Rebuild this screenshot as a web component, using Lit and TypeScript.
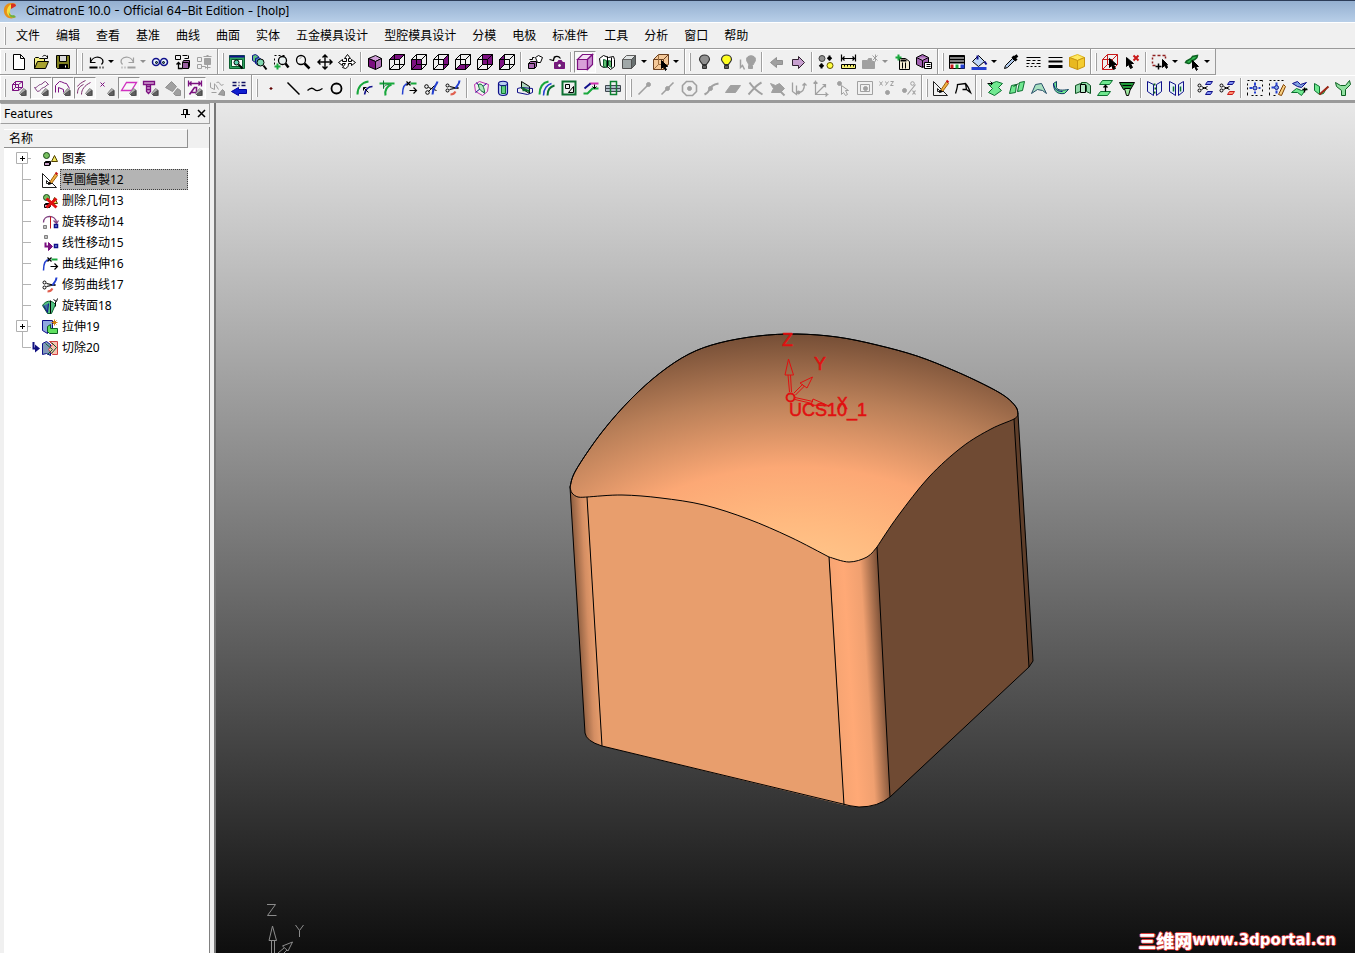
import { LitElement, html, svg, css, nothing } from "lit";
import { customElement, property, state } from "lit/decorators.js";
import { classMap } from "lit/directives/class-map.js";

type Stroke = [d: string, stroke?: string, fill?: string, width?: number];
type Point = [number, number];

const K = "#000";
const P = "#7b1080";
const G = "#a0a0a0";
const N = "#10108a";
const B = "#2440d0";
const E = "#18a83c";
const L = "#70e890";
const R = "#c81818";

const c = (x: number, y: number, r: number) =>
  `M${x - r} ${y}a${r} ${r} 0 1 0 ${2 * r} 0a${r} ${r} 0 1 0 ${-2 * r} 0`;

const WIRE = "M0 5h10v10h-10zM0 5l5-5h10v10l-5 5M10 5l5-5M5 0v10h10M5 10l-5 5";
const cube = (face: string, tint = P): Stroke[] => [[face, K, tint], [WIRE, K]];
const eraser: Stroke[] = [
  ["M8 13l4-5 3 2v5h-5z", "#8a8a8a", "#b4b4b4"],
  ["M9 14l5-4v5h-4z", "#505050", "#606060"],
];
const sheet = (d: string): Stroke => [d, "#0c7030", L];
const bulb = (tint: string): Stroke[] => [
  ["M6 10c0-1-3-3-3-5c0-6 10-6 10 0c0 2-3 4-3 5z", "#303030", tint, 1.2],
  ["M6 11h4v3h-4z", "#303030", "#606060"],
];
const scissors = (tint: string): Stroke[] => [
  [c(2, 5, 1.5), K],
  [c(2, 10, 1.5), K],
  ["M4 6l6 3M4 9l6-3", K],
  ["M8 4l2-3h5l-2 3z", N, "#8090f0"],
  ["M8 14l2-3h5l-2 3z", tint, tint === N ? "#8090f0" : "#ff9070"],
];
const entity: Stroke[] = [
  [c(4, 4, 3), "#184818", "#78c060"],
  ["M12 4l-3 6h6z", "#504000", "#f0e860"],
  ["M2 11h5v3h-5zM2 11l1-1h5v3l-1 1", K, "#c8a0c8"],
];
const sketch: Stroke[] = [
  ["M0 1v14h14zM4 8v3h3z", "#202020"],
  ["M7 10l6-9 2 2-6 8z", "#a06010", "#f0b040"],
  ["M13 0l2 2", R, "none", 2],
  ["M6 12l1-2 2 1z", K, K],
];
const pointer: Stroke = ["M8 6v8l2-2 2 4 1-1-2-3h3z", K, K];

const ICONS: Record<string, Stroke[]> = {
  new: [["M2 0h7l4 4v11h-11zM9 0v4h4", K, "#fff"]],
  open: [["M1 14v-10l1-1h3l1 1h5v3", K, "#f4f080"], ["M1 14l3-7h11l-3 7z", K, "#a8a230"], ["M9 2c2-2 4-1 5 1M14 1v3h-3", K]],
  save: [["M1 1h13v13h-12l-1-1z", K, "#808020"], ["M4 1h7v6h-7z", K, "#d8d8d8"], ["M4 10h8v4h-8z", K, K], ["M10 11v2", "#fff", "#fff"]],
  undo: [["M2 3v5h5M2 8c2-6 9-7 12-3c1 2 0 4-1 5", K, "none", 1.2], ["M1 13h8", K, "none", 2], ["M11 13h1M14 13h1", K, "none", 2]],
  redo: [["M13 3v5h-5M13 8c-2-6-9-7-12-3c-1 2 0 4 1 5", G, "none", 1.2], ["M7 13h8", G, "none", 2], ["M1 13h1M4 13h1", G, "none", 2]],
  glasses: [[c(3.5, 7.5, 3.5), N, "#e8f4ff", 1.5], [c(11.5, 7.5, 3.5), N, "#e8f4ff", 1.5], [c(4, 8, 1), K, "#4080b0"], [c(11, 8, 1), K, "#4080b0"]],
  swap: [["M1 1h5v4h-5zM8 1h5M10 4h4v-3", K], ["M4 8v6h4M2 10l2-2 2 2", K, "none", 1.3], ["M8 8h6v6h-6zM8 8l1-2h6v6l-1 2", K, "#9860a0"]],
  trash: [["M1 3h4v4h-4zM1 10h4v4h-4zM5 12h4v2", G], ["M7 2h8M8 4h6v6h-6zM10 1h2", G, G], ["M11 10v5M9 13h5", G]],
  fit: [["M0 1h15v13h-15z", "#0c6030", "#30a060"], ["M0 2h15", N, "none", 2], ["M2 5h11v7h-11z", "#0c6030", "#fff"], [c(7, 8, 2.5), K, "#60d0b0"], ["M9 10l4 4", K, "none", 2]],
  zoomSel: [["M1 1l3-1 3 2v5l-3 1-3-2z", N, "#60c080"], ["M4 4l3-1 3 2v5l-3 1-3-2z", N, "#4080c0"], [c(9, 8, 3.5), K, "#80d8b0"], ["M12 11l3 4", K, "none", 2]],
  zoomWin: [["M1 1h2M5 1h2M9 1h2M1 4v2M1 8v2", K], [c(9, 6, 4), K, "#e8f0f0", 1.3], ["M12 9l3 4", K, "none", 2.5], ["M4 9v6M1 12h6", E, "none", 2]],
  zoom: [[c(5.5, 5.5, 4.5), K, "#f4f4f4", 1.3], ["M9 9l5 5", K, "none", 2.5], ["M4 4l2-1", G]],
  pan: [["M7.500 0v15M0 7.500h15M5 3l2.500-2.500 2.500 2.500M5 12l2.500 2.500 2.500-2.500M3 5l-2.500 2.500 2.500 2.500M12 5l2.500 2.500-2.500 2.500", K, "none", 1.4]],
  orbit: [["M5 4l3-4 3 4h-2v3h3v-2l4 3-4 3v-2h-3c0 3-1 4-3 5l-3-1 3-4h-3v2l-4-3 4-3v2h4v-3z", K, "#fff"]],
  iso: [["M1 4l7-3 6 3-6 3z", K, "#d0a0d8"], ["M1 4l7 3v8l-7-3z", K, P], ["M14 4l-6 3v8l6-3z", K, "#b070b8"]],
  top: cube("M0 5l5-5h10l-5 5z"),
  front: cube("M0 5h10v10h-10z"),
  right: cube("M10 5l5-5v10l-5 5z"),
  bottom: cube("M0 15l5-5h10l-5 5z"),
  back: cube("M5 0h10v10h-10z"),
  left: cube("M0 5l5-5v10l-5 5z"),
  light: [["M1 9h6v5h-6zM1 9l2-2h6v5l-2 2", K, "#a868b0"], ["M8 3l3-2 4 2-2 5h-3zM7 3h-2v2h-3", K, "#fff"]],
  camera: [["M5 8h10v6h-10zM8 8l1-2h3l1 2", P, "#702078"], [c(10, 11, 1), "#fff", "#fff"], ["M0 5l4 1 1-4M4 5c1-4 5-4 7-1", K, "none", 1.2]],
  shaded: [["M0 5h10v10h-10z", P, "#d8a0d8", 1.2], ["M0 5l5-5h10l-5 5z", P, "#f4e0f4", 1.2], ["M10 5l5-5v10l-5 5z", P, "#c890d0", 1.2]],
  section: [["M0 4l4-3 5 2 5-1 1 3v7l-4 3-3-3-4 1-3-2z", K, "#fff"], ["M4 5l3 1v7l-3-1zM9 6l3 1v6l-3-2z", "#0c6030", "#60c070"], ["M8 2v11M12 3v9", K]],
  solid: [["M1 5h9v9h-9z", "#505050", "#a0a8a8"], ["M1 5l4-4h9l-4 4z", "#606060", "#e0e4e4"], ["M10 5l4-4v9l-4 4z", "#505050", "#687070"]],
  pick: [["M0 5h10v10h-10zM0 5l5-5h10v10l-5 5M10 5l5-5", "#6a4020", "#f4c898"], ["M5 0v10h10M5 10l-5 5", "#a07040"], pointer],
  bulbOff: bulb("#909090"),
  bulbOn: bulb("#ffff20"),
  bulbPick: [["M8 10c0-1-2-3-2-5c0-5 9-5 9 0c0 2-2 4-2 5z", G, G], ["M8 11h4v3h-4z", G, G], ["M0 5v8l2-2 2 4", G, "none", 1.5]],
  prev: [["M2 8l6-5v3h6v4h-6v3z", "#909090", G]],
  next: [["M14 8l-6-6v3h-6v6h6v3z", "#302030", "#c8a0d0"]],
  convert: [[c(3.5, 4, 3), "#404040", "#909090"], [c(11.5, 11, 3), "#605000", "#ffff40"], ["M11 1v5M9 3l2 2 2-2M3 14v-5M1 12l2-2 2 2", K, "none", 2]],
  measure: [["M1 0v7M15 0v7M2 4h12M4 2l-2 2 2 2M12 2l2 2-2 2", K, "none", 1.2], ["M1 10h14v4h-14z", K, "#f4f070"], ["M4 10v2M7 10v2M10 10v2M13 10v2", K]],
  stamp: [["M0 6h5l1-2h3v3h3v7h-12z", G, G], ["M10 1l5 5M15 1l-5 5M13 0v7", G]],
  addDoc: [["M5 4h6l4 3v8h-10z", K, "#f4ecd0"], ["M8 8v6M11 8v6", K, "#804000"], ["M6 6h6", K, K, 2], ["M4 0v6M1 3h6", E, "none", 2]],
  cubeDoc: [["M0 3l6-3 6 3v7l-6 3-6-3z", K, "#a060b0"], ["M0 3l6 3 6-3M6 6v7", K, "#c898d0"], ["M8 8h7v6h-7zM10 10h4M10 12h4", K, "#fff"]],
  table: [["M0 1h15v13h-15z", K, "#fff"], ["M0 2h15M0 5h15M0 8h15", K, "none", 2], ["M1 12h3", R, R, 4], ["M6 12h3", E, E, 4], ["M11 12h4", B, B, 4]],
  fill: [["M1 7l6-6 6 6-6 5z", K, "#c0d8f8"], ["M6 1v4M13 7l2 3", N, "none", 2], ["M0 14h15", B, "none", 3]],
  dropper: [["M1 14l1-3 7-7 2 2-7 7z", K, "#b0c8e8"], ["M9 2l4 4M11 3l3-2", K, K, 3]],
  dashes: [["M1 3h14", K], ["M1 6h4M7 6h3M12 6h3", K], ["M1 9h3M6 9h3M11 9h4", K], ["M1 12h2M5 12h2M9 12h2M13 12h2", K]],
  weight: [["M1 3h14", K], ["M1 7h14", K, "none", 2], ["M1 12h14", K, "none", 3]],
  yellow: [["M0 3l8-3 7 3-7 3z", "#e0b820", "#ffe860"], ["M0 3l8 3v9l-8-3z", "#c89410", "#e8b820"], ["M15 3l-7 3v9l7-3z", "#c89410", "#f4cc30"]],
  redBox: [[WIRE, R], ["M7 4v9l2-2 2 4 2-1-2-4h3z", K, K]],
  unpick: [["M2 3v9l2-2 2 4 2-1-2-4h3z", K, K], ["M9 1l5 5M14 1l-5 5", R, "none", 2]],
  boxPick: [["M0 1h3M5 1h3M10 1h3M0 3v2M0 7v2M0 11h3M13 2v2", "#902020", "none", 1.5], ["M10 5v8l2-2 2 3 1-1-1-3h1z", K, K], ["M6 9v6M3 12h6", K, "none", 1.5]],
  greenPick: [["M1 8c1-3 5-2 7-6l5-1c0 3-4 5-6 5 0 2-2 3-3 3z", "#0c6020", "#30b850", 1.5], pointer],

  e1: [["M1 4h6v6h-6zM1 4l3-3h7v6l-4 3M7 4l4-3M4 1v6h7M1 10l3-3", P], ...eraser],
  e2: [["M1 7c2 1 4-3 6-3s3-3 5-3l3 3c-2 0-3 3-5 3s-3 4-6 4z", "#804080"], ...eraser],
  e3: [["M0 12v-7l4-4c3 0 4 2 7 2l3 5M3 7l5 2v3M3 7v5", P], ...eraser],
  e4: [["M0 13c0-5 2-7 6-9M4 14c0-5 3-9 9-12M0 6c1-2 4-4 8-6", "#803070"], ...eraser],
  e5: [["M1 2l4 4M5 2l-4 4", P], ...eraser],
  e6: [["M0 10l5-8h10l-5 8z", "#d030c0", "none", 1.3], ...eraser],
  e7: [["M0 1h11v3h-11zM3 4v7l2 2 2-2v-7M3 6h4M3 9h4", P, "#d0a0d0", 1.3], ...eraser],
  e8: [["M0 7l6-6 5 5-4 5z", "#909090", G], ["M8 13l4-5 3 2v5h-5z", "#909090", G]],
  e9: [["M1 0v6M14 0v6M2 3h11M4 1l-2 2 2 2M11 1l2 2-2 2", P, "none", 1.3], ["M2 14l5-7h2v7M4 12h5", P, "none", 1.6], ...eraser],
  e10: [["M1 2v5l4 2v-6M7 2c5-2 2 5 7 2M2 12h5M6 4l3 5", G], ["M9 14l4-5 2 2v4z", "#909090", G]],
  e11: [["M1 2h4M7 2h1M10 2h4M1 5h4M7 5h1M10 5h4", "#101060", "none", 1.5], ["M15 9h-8v-2l-7 4 7 4v-2h8z", "#0000a0", "#1020d0"]],
  point: [["M6 8h3M7.500 6.500v3", "#600000", "#600000", 1.2]],
  line: [["M2 2l12 12", K, "none", 1.5]],
  spline: [["M0 10c3-3 5-3 7-1s5 1 8-1", K, "none", 1.3]],
  circle: [[c(7, 8, 5), K, "none", 1.8]],
  c1: [["M0 14c0-7 4-12 11-13", E, "none", 2], ["M7 14c1-5 4-8 8-8", N, "none", 1.5], ["M6 7l5 5M6 7v3M6 7h3", K]],
  c2: [["M0 3h15", E, "none", 2], ["M4 0v8c0-3 3-4 6-4", "#0c7030"], ["M6 15c-1-6 1-9 6-11", E, "none", 2]],
  c3: [["M1 14c0-8 2-11 6-11", B, "none", 1.5], ["M9 3h6", E, "none", 2], ["M5 1l4 4M9 1l-4 4M8 10h7M12 7l3 3-3 3", K, "none", 1.2]],
  c4: [[c(3, 6, 1.8), K], [c(4, 12, 1.8), K], ["M5 7l8 3M5 11l6-6", K], ["M14 1c-1 4-5 6-5 13", B, "none", 2]],
  c5: [[c(2, 5, 1.5), K], [c(2, 10, 1.5), K], ["M4 6l9 2M4 9l9-2", K, "none", 1.2], ["M14 0c0 4-3 5-4 8", B, "none", 2], ["M10 11c-1 2-3 3-5 3", "#e06050", "none", 2]],
  s1: [["M1 4l5-3 9 3-1 7-5 4-7-4z", "#c030b0"], ["M3 2l8 11M2 12l11-9", N], ["M5 4c4-2 6 4 6 8-4-1-6-4-6-8z", "#0c7030", "#b0e8c0"]],
  s2: [["M3 3c0-3 9-3 9 0v9c0 4-9 4-9 0z", N, "#b8d0f0", 1.2], ["M6 5h4v8h-4z", "#0c7030", "#60d080"], ["M3 3c0 3 9 3 9 0", N]],
  s3: [["M4 1l8 5v7l-8-5z", K, "#b0d8c0"], ["M0 8l4-1 11 1v4l-5 2-10-2z", N], ["M4 7l8 4M5 10h7", "#0c7030", "none", 1.5]],
  s4: [["M0 14c0-8 4-12 9-13", E, "none", 2], ["M4 15c0-7 4-11 8-12", B, "none", 1.5], ["M8 15c0-6 3-9 7-10", "#0c7030", "none", 2]],
  s5: [["M1 1h13v13h-13z", "#0c7030", "none", 2], ["M4 4h4v4h-4zM12 6v6h-5z", K]],
  s6: [["M6 3h9", "#d030b0", "none", 2], ["M0 13h4l5-5h6", E, "none", 2], ["M1 8l6-5", N, "none", 2], ["M11 4v4M9 6l2 2 2-2", K]],
  s7: [["M0 5h15v6h-15z", "#404850", "#b0bcc8"], ["M5 1h6v13h-6z", "#0c8030", "none", 1.5], ["M0 8h15", "#404850"]],
  g1: [["M1 14l10-10", G, "none", 1.6], [c(11, 4, 2), G, G]],
  g2: [["M2 14l12-12", G, "none", 1.6], [c(8, 8, 2), G, G]],
  g3: [["M5 1h6l4 4v6l-4 4h-6l-4-4v-6z", G, "none", 1.6], [c(8, 8, 2), G, G]],
  g4: [["M1 14c2-1 4-2 5-5s4-5 9-6", G, "none", 2], [c(7, 8, 2), G, G]],
  g5: [["M0 12l5-7h10l-5 7z", G, G]],
  g6: [["M2 2c2 3 8 9 13 12M14 2c-6 3-9 8-13 12", G, "none", 2]],
  g7: [["M1 3l5 2 4-2 5 5-4 4h-9l2-4z", G, G], ["M10 10l5 5", G, "none", 2]],
  g8: [["M1 2v9l4 3v-9M7 12c4 0 6-4 6-9M11 5l2-2 2 2", G, "none", 1.3], [c(7, 12, 1.5), G, G]],
  g9: [["M2 0v14h13M2 14l10-10M0 3l2-2 2 2M12 12l2 2-2 2M9 4h3v3", G, "none", 1.2]],
  g10: [[c(4, 3, 2), G, G], ["M6 5v9l2-2 2 3 2-1-2-4h3z", G, "#f0f0f0"]],
  g11: [["M0 1h15v13h-15zM3 4h9v7h-9z", G], [c(8, 8, 2), G, G]],
  g12: [["M0 1l3 4M3 1l-3 4M6 1l1 2M9 1l-3 4M11 1h3l-3 4h3", G], [c(8, 12, 2), G, G]],
  g13: [[c(3, 10, 2), G, G], ["M6 14l8-10M11 10l3 4M14 10l-3 4", G, "none", 1.2], [c(11, 3, 1.8), G]],
  sketch,
  poly: [["M0 13c1-3 2-6 2-9l8-1c2 2 3 4 5 9l-4-3h-4M10 3l1 6", K, "none", 1.3]],
  f1: [sheet("M1 4l8-3 6 2-4 4 3 3-7 5-6-3 4-4z"), ["M0 3h5M3 1l2 2-2 2", K]],
  f2: [sheet("M0 13l2-8 5-1-1 8zM8 11l2-9 5-1-2 9z"), ["M4 6l5-3", "#0c5020"]],
  f3: [["M0 13l4-9 6-1 5 10-4-3-5-1z", "#28506a", "#a8e0c0"]],
  f4: [["M0 3l3-2v6c1 3 6 3 12 2l-4 4c-7 1-11-2-11-10z", "#104060", L], ["M0 3c1 6 4 8 9 8", N]],
  f5: [["M0 5l5-2v8l-5 2zM6 2h5l4 3v8l-4-2v-6h-5z", "#0c5020", "#90d8a8"], ["M5 4h5v8h-5z", K, "#b8e8c8"]],
  f6: [sheet("M2 4l3-4h10l-3 4zM0 15l3-4h10l-3 4z"), ["M8 5v6M6 7l2-2 2 2", K, "none", 1.3]],
  f7: [["M0 2h15l-4 7h-7z", K, "#209838"], ["M5 8h6l-2 7h-2zM3 5h9", K, "#a0e8a0"]],
  f8: [["M0 1l6 3v11l-6-4zM14 1l-5 3v11l5-4z", N, "#e4f0f8"], ["M7 3v2M8 7v2M7 11v2", "#0c6020", "none", 2]],
  f9: [["M0 1l6 3v11l-6-4zM14 1l-5 3v11l5-4z", N, "#e4f0f8"], ["M4 6v5M11 6v5", "#0c7030", "none", 1.5]],
  f10: scissors(N),
  f11: scissors(R),
  f12: [["M0 0h2M4 0h2M8 0h2M12 0h3v1M15 4v2M15 9v2M15 15h-2M10 15h-2M6 15h-2M0 15v-3M0 9v-2M0 5v-2", K], [c(7.5, 7.5, 2), N, "#80a8e8"], ["M7.500 2v3M7.500 11v2M2 7.500h3M11 7.500h2", B, "none", 2]],
  f13: [["M0 0h2M4 0h2M8 0h2M12 0h2M0 15v-3M0 9v-2M0 5v-2M4 15h2", K], [c(7, 7, 2), N, "#80a8e8"], ["M7 2v3M2 7h3M7 10v3", B, "none", 2], ["M9 14l5-10 2 2-4 9z", "#804000", "#f8d080"]],
  f14: [["M1 3l5-2 3 3 6-2-5 5-4-1z", N, "#80a0e0"], sheet("M0 12l5-4 5 2 5-2-5 7-4-3z"), ["M11 9h5M13 7v5", K, "none", 1.3]],
  f15: [sheet("M1 3l5 3v8l-5-4z"), sheet("M6 14l8-8-4 7z"), ["M6 14l9-8", "#a02818", "none", 2]],
  f16: [["M0 2l5 3h5l4-5 1 4-5 5v6h-4v-5l-5-4z", "#0c6020", "#90e0a0"]],

  entity,
  del: [...entity, ["M4 5l10 9M14 5l-10 9", "#e01010", "none", 3]],
  rotMove: [["M1 8c0-8 12-8 13 0M11 6l3 3 2-3", "#804080", "none", 1.3], ["M8 2v12", R], ["M1 11h3v3h-3z", "#808080", "#c0c0c0"], ["M12 10h3v3h-3z", N, "#80a0e0", 1.5]],
  linMove: [["M2 0h3v3h-3z", "#808080", "#c0c0c0"], ["M3 7v4h4", P, "none", 2], ["M6 7l4 4-4 4z", P, P], ["M12 9h3v3h-3z", N, "#80a0e0", 1.5]],
  revolve: [["M0 7c3-5 9-6 13-1l-4 9h-4z", "#0c6030", "#50c080"], ["M1 7l4 7 1-9", N, "#4070a0"], ["M8 2v13M11 1l3 2 1-3M13 3v5", K]],
  extrude: [["M0 1h10v9h-5v4l-5-3z", N, "#90a8e0"], ["M5 7l3-2v4h7v5h-8l-2-2z", "#0c6020", "#60e060"], ["M12 0v6M9 3h6M10 1l4 4M14 1l-4 4", "#d08010"]],
  cut: [["M0 3l4-2 4 3v11l-4-2-4 1z", N, "#8098b8"], ["M7 1h8v13h-5l-4-5 4-5z", "#d04040", "#f8c0b0"], ["M3 3l7 6-5 5M9 2l5 5-5 6", "#0c6030"]],
};

interface Tool { icon: string; label: string; drop?: boolean; on?: boolean; off?: boolean }
type Band = Tool[][];

const t = (icon: string, label: string, flags = ""): Tool => ({
  icon, label, drop: flags.includes("v"), on: flags.includes("+"), off: flags.includes("-"),
});
const series = (prefix: string, from: number, to: number, label: string, on: number[] = []): Tool[] =>
  Array.from({ length: to - from + 1 }, (_, i) => t(`${prefix}${from + i}`, `${label} ${from + i}`, on.includes(from + i) ? "+" : ""));

const ROW_ONE: Band[] = [
  [[t("new", "New"), t("open", "Open"), t("save", "Save")]],
  [[t("undo", "Undo", "v"), t("redo", "Redo", "v-"), t("glasses", "Preview"), t("swap", "Replace"), t("trash", "Purge", "-")]],
  [
    [t("fit", "Zoom all"), t("zoomSel", "Zoom selected"), t("zoomWin", "Zoom window"), t("zoom", "Zoom"), t("pan", "Pan"), t("orbit", "Rotate")],
    [t("iso", "Isometric"), t("top", "Top"), t("front", "Front"), t("right", "Right"), t("bottom", "Bottom"), t("back", "Back"), t("left", "Left")],
    [t("light", "Lighting"), t("camera", "Capture")],
    [t("shaded", "Shaded", "+"), t("section", "Section"), t("solid", "Display mode", "v"), t("pick", "Pick mode", "v")],
  ],
  [
    [t("bulbOff", "Hide"), t("bulbOn", "Show"), t("bulbPick", "Show picked", "-")],
    [t("prev", "Previous", "-"), t("next", "Next")],
    [t("convert", "Convert"), t("measure", "Measure"), t("stamp", "Activate", "v-"), t("addDoc", "Add document"), t("cubeDoc", "Part properties")],
  ],
  [[t("table", "Attributes"), t("fill", "Fill colour", "v"), t("dropper", "Pick colour"), t("dashes", "Line style"), t("weight", "Line weight"), t("yellow", "Material")]],
  [[t("redBox", "Pick box"), t("unpick", "Unpick")], [t("boxPick", "Pick by window", "v"), t("greenPick", "Pick by face", "v")]],
];

const ROW_TWO: Band[] = [
  [series("e", 1, 11, "Filter", [2, 3, 4, 6, 9])],
  [
    [t("point", "Point"), t("line", "Line"), t("spline", "Spline"), t("circle", "Circle")],
    series("c", 1, 5, "Curve"),
    series("s", 1, 7, "Derived curve"),
  ],
  [series("g", 1, 13, "Snap")],
  [[t("sketch", "Sketch"), t("poly", "Composite")]],
  [series("f", 1, 7, "Face"), series("f", 8, 9, "Face"), series("f", 10, 11, "Face"), series("f", 12, 16, "Face")],
];

const MENUS = ["文件", "编辑", "查看", "基准", "曲线", "曲面", "实体", "五金模具设计", "型腔模具设计", "分模", "电极", "标准件", "工具", "分析", "窗口", "帮助"];

const FEATURES = [
  { icon: "entity", name: "图素", group: true },
  { icon: "sketch", name: "草圖繪製12" },
  { icon: "del", name: "删除几何13" },
  { icon: "rotMove", name: "旋转移动14" },
  { icon: "linMove", name: "线性移动15" },
  { icon: "c3", name: "曲线延伸16" },
  { icon: "c5", name: "修剪曲线17" },
  { icon: "revolve", name: "旋转面18" },
  { icon: "extrude", name: "拉伸19", group: true },
  { icon: "cut", name: "切除20" },
];

/** Catmull-Rom spline through the points, as cubic Bézier segments. */
function smooth(pts: Point[]): string {
  let d = "";
  for (let i = 0; i < pts.length - 1; i++) {
    const a = pts[Math.max(i - 1, 0)];
    const b = pts[i];
    const e = pts[i + 1];
    const f = pts[Math.min(i + 2, pts.length - 1)];
    const n = (v: number) => v.toFixed(1);
    d += `C${n(b[0] + (e[0] - a[0]) / 6)} ${n(b[1] + (e[1] - a[1]) / 6)} ${n(e[0] - (f[0] - b[0]) / 6)} ${n(e[1] - (f[1] - b[1]) / 6)} ${e[0]} ${e[1]}`;
  }
  return d;
}

const DOME: Point[] = [[570, 487], [576, 470], [602, 432], [631, 399], [660, 373], [689, 354], [719, 343], [758, 336], [797, 334], [837, 337], [877, 345], [917, 356], [955, 371], [987, 386], [1006, 397], [1016, 407], [1018, 414]];
const RIM_RIGHT: Point[] = [[1018, 414], [1014, 419], [991, 429], [962, 447], [929, 477], [898, 516], [877, 547]];
const RIM_CORNER: Point[] = [[877, 547], [867, 557], [849, 562], [829, 557]];
const RIM_FRONT: Point[] = [[829, 557], [790, 537], [748, 519], [704, 505], [661, 498], [622, 495], [587, 497]];
const RIM_LEFT: Point[] = [[587, 497], [578, 497], [572, 493], [570, 487]];

@customElement("tool-icon")
class ToolIcon extends LitElement {
  @property() name = "";

  static styles = css`
    :host { display: block; width: 16px; height: 16px; }
    svg { display: block; overflow: visible; }
  `;

  render() {
    return html`<svg width="16" height="16" viewBox="0 0 16 16" aria-hidden="true">
      <g transform="translate(.5 .5)">
        ${(ICONS[this.name] ?? []).map(([d, stroke = K, fill = "none", width = 1]) =>
          svg`<path d=${d} stroke=${stroke} fill=${fill} stroke-width=${width} />`)}
      </g>
    </svg>`;
  }
}

@customElement("tool-row")
class ToolRow extends LitElement {
  @property({ attribute: false }) bands: Band[] = [];

  static styles = css`
    :host { display: flex; height: 26px; overflow: hidden; }
    .band {
      display: flex; align-items: center; flex: none; box-sizing: border-box;
      padding: 0 var(--band-end, 1px) 0 4px;
      border-right: 1px solid #9a9a9a; border-bottom: 1px solid #9a9a9a;
      box-shadow: inset 0 1px #fff, inset 1px 0 #fff;
    }
    .grip { width: 1px; height: 18px; margin-right: 2px; border-left: 1px solid #fff; background: #a0a0a0; }
    .group { display: flex; align-items: center; }
    .group + .group::before { content: ""; width: 1px; height: 20px; margin: 0 2px; border-right: 1px solid #fff; background: #a0a0a0; }
    button { border: 1px solid transparent; padding: 0; margin: 0; background: none; box-sizing: border-box; height: 22px; }
    .tool { width: 22px; padding: 0 2px; }
    .on { background: #f8f8f8; border-color: #909090 #fff #fff #909090; }
    .drop { width: 10px; display: grid; justify-content: center; align-content: center; }
    .caret { border: 3px solid transparent; border-top-color: #000; border-bottom: 0; margin-right: 2px; }
    .off .caret { border-top-color: #909090; }
  `;

  private tool(item: Tool) {
    return html`
      <button class=${classMap({ tool: true, on: !!item.on })} title=${item.label} aria-label=${item.label}>
        <tool-icon name=${item.icon}></tool-icon>
      </button>
      ${item.drop
        ? html`<button class=${classMap({ drop: true, off: !!item.off })} aria-label="${item.label} options"><span class="caret"></span></button>`
        : nothing}
    `;
  }

  render() {
    return this.bands.map((band) => html`
      <div class="band" role="toolbar">
        <span class="grip"></span>
        ${band.map((group) => html`<div class="group">${group.map((item) => this.tool(item))}</div>`)}
      </div>`);
  }
}

@customElement("feature-tree")
class FeatureTree extends LitElement {
  @state() private selected = 1;

  static styles = css`
    :host { display: flex; flex-direction: column; width: 210px; flex: none; background: #f0f0f0; }
    .head {
      display: flex; align-items: center; height: 21px; box-sizing: border-box; padding: 0 0 0 3px;
      border: 1px solid #a0a0a0; border-left-color: #fff; font-size: 12px;
    }
    .head h2 { flex: 1; margin: 0; font: inherit; }
    .head button { width: 16px; height: 16px; padding: 0; border: 0; background: none; display: grid; place-items: center; }
    .body { flex: 1; margin-top: 3px; background: #fff; border-right: 1px solid #808080; border-left: 4px solid #f0f0f0; }
    .columns { background: #f0f0f0; padding-top: 2px; }
    .column {
      width: 184px; height: 19px; box-sizing: border-box; padding-left: 5px; line-height: 18px;
      border-right: 1px solid #909090; border-bottom: 1px solid #909090; border-top: 1px solid #fff;
    }
    ul { list-style: none; margin: 0; padding: 0; }
    li { display: flex; align-items: center; height: 21px; width: 184px; }
    .branch { flex: none; display: block; margin-right: 1px; }
    .name {
      flex: 1; border: 1px solid transparent; margin-left: 2px; padding: 0 0 0 1px; height: 21px; line-height: 18px;
      text-align: left; font: inherit; color: #000; background: none; white-space: nowrap;
    }
    .name.selected { background: #b4b4b4; border: 1px dotted #404040; }
  `;

  private branch(i: number, group?: boolean) {
    const last = i === FEATURES.length - 1;
    return html`<svg class="branch" width="37" height="21" viewBox="4 0 37 21" aria-hidden="true">
      <path d="M22.5 ${i ? 0 : 10}V${last ? 10.5 : 21}M22.5 10.5H31" stroke="#b4b4b4" fill="none" />
      ${group ? svg`<path d="M16.5 4.5h11v11h-11z" fill="#fff" stroke="#b0b0b0" /><path d="M20 10.5h5M22.5 8v5" stroke="#000" />` : nothing}
      ${last ? svg`<path d="M33.5 5v6.5h3" stroke="#101080" stroke-width="2" fill="none" /><path d="M35 7.5l5 4-5 4z" fill="#101080" />` : nothing}
    </svg>`;
  }

  render() {
    return html`
      <div class="head">
        <h2>Features</h2>
        <button aria-label="Pin"><svg width="9" height="9" viewBox="0 0 9 9"><path d="M2.5 5V.5h4V5M0 5.5h9M4.5 5.5V9M5.5 1v4" stroke="#000" fill="none" /></svg></button>
        <button aria-label="Close"><svg width="9" height="9" viewBox="0 0 9 9"><path d="M1 1l7 7M8 1L1 8" stroke="#000" stroke-width="1.5" /></svg></button>
      </div>
      <div class="body">
        <div class="columns"><div class="column">名称</div></div>
        <ul>
          ${FEATURES.map((f, i) => html`
            <li>
              ${this.branch(i, f.group)}
              <tool-icon name=${f.icon}></tool-icon>
              <button class=${classMap({ name: true, selected: i === this.selected })} @click=${() => (this.selected = i)}>${f.name}</button>
            </li>`)}
        </ul>
      </div>
    `;
  }
}

@customElement("model-view")
class ModelView extends LitElement {
  static styles = css`
    :host {
      display: block; position: relative; flex: 1; min-width: 0; overflow: hidden;
      border-left: 2px solid #787878; background: linear-gradient(#e8e8e8, #0e0e0e);
    }
    .scene { display: block; width: 100%; height: 100%; }
    .label { font-family: "Liberation Sans", Arial, sans-serif; }
    .mark {
      position: absolute; right: 19px; bottom: 3px; display: flex; align-items: center;
      font: bold 15px/20px "DejaVu Sans", Verdana, sans-serif; color: #fff; text-decoration: none;
      text-shadow: 1px 0 #d84040, -1px 0 #d84040, 0 1px #d84040, 0 -1px #d84040;
    }
    .site { font: 900 18px/20px "Noto Sans CJK SC", sans-serif; }
  `;

  render() {
    const outline = `M570 487${smooth(DOME)}L1033 661L1029 667L890 797Q878 807 859 807Q849 806 843 804L602 746Q586 741 585 733Z`;
    return html`
      <svg class="scene" viewBox="216 103 1139 850" role="img" aria-label="Solid model">
        <defs>
          <radialGradient id="dome" gradientUnits="userSpaceOnUse" cx="0" cy="0" r="1" gradientTransform="translate(795 600) scale(430 266)">
            <stop offset=".1" stop-color="#ffc88c" />
            <stop offset=".3" stop-color="#ffb97f" />
            <stop offset=".5" stop-color="#fca875" />
            <stop offset=".76" stop-color="#b97f58" />
            <stop offset="1" stop-color="#754e36" />
          </radialGradient>
          <linearGradient id="post" gradientUnits="userSpaceOnUse" x1="836" y1="680" x2="884" y2="677">
            <stop offset="0" stop-color="#f6a472" />
            <stop offset=".3" stop-color="#ffa976" />
            <stop offset=".65" stop-color="#f0a070" />
            <stop offset="1" stop-color="#80543a" />
          </linearGradient>
          <linearGradient id="edge" gradientUnits="userSpaceOnUse" x1="577" y1="620" x2="595" y2="619">
            <stop offset="0" stop-color="#8a5c3f" />
            <stop offset=".6" stop-color="#d48e63" />
            <stop offset="1" stop-color="#e89e6d" />
          </linearGradient>
        </defs>
        <path d=${outline} fill="#6f4a33" />
        <path d="M1014 419L1018 414L1033 661L1029 667Z" fill="#5e3e2a" />
        <path d="M587 497V480H829V557L844 805L602 746Z" fill="#e89e6d" />
        <path d="M570 487L587 497L602 746Q586 741 585 733Z" fill="url(#edge)" />
        <path d="M829 550L877 546L890 797Q878 807 859 807Q849 806 844 805Z" fill="url(#post)" />
        <path d="M570 487${smooth(DOME)}${smooth(RIM_RIGHT)}${smooth(RIM_CORNER)}${smooth(RIM_FRONT)}${smooth(RIM_LEFT)}Z" fill="url(#dome)" stroke="#000" />
        <path d="${outline}M587 497L602 746M829 557L844 805M877 547L890 797M1014 419L1029 667" fill="none" stroke="#000" />
        <g stroke="#e01010" fill="none">
          <circle cx="790.500" cy="397.500" r="4" stroke-width="2" />
          <path d="M789.500 392L788 375M791.500 392L790.500 375M785 375L788.500 359L793.500 375Z" />
          <path d="M794 393L803 384M795.500 395L804.500 386M800 383L812.500 377L807 388Z" />
          <path d="M795 397.500L813 401.500M795 399.500L812 403.500M813 399L829 406L811 405Z" />
        </g>
        <g class="label" fill="#e01010" stroke="#e01010" stroke-width=".5" font-size="18">
          <text x="782" y="346">Z</text>
          <text x="814" y="370">Y</text>
          <text x="837" y="409" font-size="16">X</text>
          <text x="789" y="416">UCS10_1</text>
        </g>
        <g stroke="#8c8c8c" fill="none">
          <path d="M267 904.500H275.500L267.500 915.500H276.500M295.500 925L299.500 930.500L303.500 925M299.500 930.500V937" />
          <path d="M272.500 926L269 940.500H276.500ZM271.500 941V953M274.500 941V953M292.500 942L282.500 946L288 951ZM284 948L278 953M287 950L283 954" />
        </g>
      </svg>
      <a class="mark" href="#"><span class="site">三维网</span>www.3dportal.cn</a>
    `;
  }
}

@customElement("app-root")
class AppRoot extends LitElement {
  static styles = css`
    :host {
      display: flex; flex-direction: column; height: 100vh; overflow: hidden; background: #f0f0f0; color: #000;
      font: 12px/18px "Noto Sans", "Noto Sans CJK SC", sans-serif;
    }
    .title {
      display: flex; align-items: center; gap: 7px; height: 22px; box-sizing: border-box; padding: 0 3px 2px;
      border-top: 1px solid #2c3c58; background: linear-gradient(#94afd0, #b8cfe8);
    }
    .title h1 { margin: 0; font: 12px/18px Inter, sans-serif; }
    .menu { display: flex; align-items: center; height: 27px; box-sizing: border-box; border-bottom: 1px solid #9a9a9a; border-top: 1px solid #fff; padding-left: 4px; }
    .menu::before { content: ""; width: 1px; height: 18px; margin-right: 2px; border-left: 1px solid #fff; background: #a0a0a0; }
    .menu button { border: 0; background: none; padding: 0 8px; font: inherit; color: #000; }
    .bars { border-bottom: 2px solid #9a9a9a; }
    .first { --band-end: 2px; }
    .work { display: flex; gap: 4px; flex: 1; min-height: 0; }
  `;

  render() {
    return html`
      <header class="title">
        <svg width="16" height="18" viewBox="0 0 16 18" aria-hidden="true">
          <path d="M13 2C5-1 0 4 1 10s7 8 12 5C8 15 6 12 6 9s2-6 7-7z" fill="#e89018" />
          <path d="M13 2C8 1 5 4 4 8s2 7 7 8C8 14 7 12 7 9s2-5 6-7z" fill="#f4e040" />
          <path d="M8 2c3-1 5 0 5 2L8 7z" fill="#d83020" />
          <path d="M6 9c0 3 2 5 5 4l2 2c-5 2-8-1-7-6z" fill="#70b040" />
        </svg>
        <h1>CimatronE 10.0 - Official 64–Bit Edition - [holp]</h1>
      </header>
      <nav class="menu">${MENUS.map((m) => html`<button>${m}</button>`)}</nav>
      <div class="bars">
        <tool-row class="first" .bands=${ROW_ONE}></tool-row>
        <tool-row .bands=${ROW_TWO}></tool-row>
      </div>
      <main class="work">
        <feature-tree></feature-tree>
        <model-view></model-view>
      </main>
    `;
  }
}
